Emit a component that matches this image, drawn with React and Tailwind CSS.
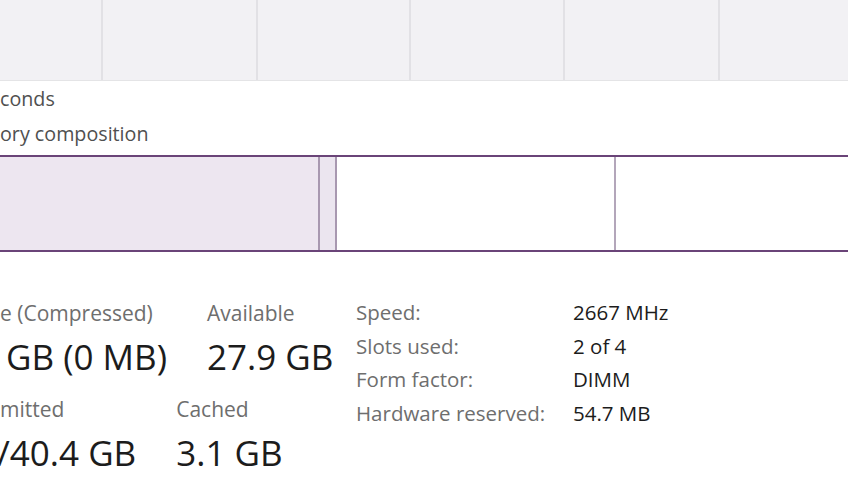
/* Memory performance panel — cropped view: graph, composition bar, stats. */
import React from 'react';

const font = { fontFamily: '"Open Sans", "Noto Sans", sans-serif' };

const gridCols = [101, 155, 153, 154, 155, 200];

const specs = [
    ['Speed:', '2667 MHz'],
    ['Slots used:', '2 of 4'],
    ['Form factor:', 'DIMM'],
    ['Hardware reserved:', '54.7 MB'],
];

export default function App() {
    return (
        <div className="w-[848px] h-[477px] overflow-hidden bg-white" style={font}>
            {/* Usage graph (bottom strip) */}
            <div className="h-[81px] flex bg-[#f2f1f4] border-b border-[#e4e4e6]">
                {gridCols.map((w, i) => (
                    <div
                        key={i}
                        className={`h-full shrink-0 ${i > 0 ? 'border-l-2 border-[#e2e1e5]' : ''}`}
                        style={{ width: w }}
                    />
                ))}
            </div>

            {/* Captions */}
            <div className="text-[19.7px] text-[#505050]">
                <div className="h-[35px] leading-[35px] whitespace-nowrap">conds</div>
                <div className="h-[35px] leading-[35px] whitespace-nowrap">ory composition</div>
            </div>

            {/* Memory composition bar */}
            <div className="mt-[4px] h-[97px] flex border-y-2 border-[#6a4478]">
                <div className="w-[320px] shrink-0 bg-[#ede6f0] border-r-2 border-[#a898b0]" />
                <div className="w-[17px] shrink-0 bg-[#ebe5ef] border-r-2 border-[#a898b0]" />
                <div className="w-[279px] shrink-0 bg-white border-r-2 border-[#b3a6ba]" />
                <div className="flex-1 bg-white" />
            </div>

            {/* Stats */}
            <div className="flex pt-[46px]">
                <div className="w-[356px] shrink-0">
                    <div className="flex gap-[40px]">
                        <Stat label="e (Compressed)" value="GB (0 MB)" valueClass="pl-[6px]" />
                        <Stat label="Available" value="27.9 GB" />
                    </div>
                    <div className="flex gap-[40px] mt-[8px]">
                        <Stat label="mitted" value="/40.4 GB" valueClass="-ml-[3px]" />
                        <Stat label="Cached" value="3.1 GB" />
                    </div>
                </div>
                <div className="-mt-[2px]">
                    {specs.map(([k, v]) => (
                        <div key={k} className="flex h-[33.7px] leading-[33.7px] text-[20.5px] whitespace-nowrap">
                            <div className="w-[217px] text-[#6e6e6e]">{k}</div>
                            <div className="text-[#1c1c1c]">{v}</div>
                        </div>
                    ))}
                </div>
            </div>
        </div>
    );
}

const Stat = ({ label, value, valueClass = '' }) => (
    <div className="whitespace-nowrap">
        <div className="h-[30px] leading-[30px] text-[21px] text-[#6e6e6e]">{label}</div>
        <div className={`h-[58px] leading-[58px] text-[35px] text-[#1c1c1c] ${valueClass}`}>{value}</div>
    </div>
);
